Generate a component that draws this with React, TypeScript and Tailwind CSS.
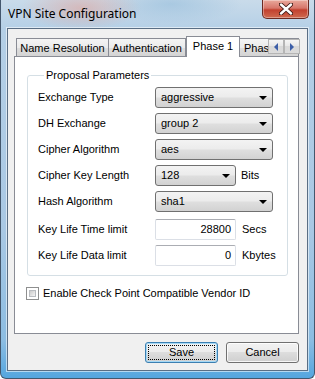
import React from "react";

const Combo = ({ value, className }: { value: string; className: string }) => (
  <div
    className={`flex h-[21px] items-center justify-between rounded-[3px] border border-[#707070] bg-[linear-gradient(#f3f3f3,#ececec_45%,#dedede_55%,#d2d2d2)] pl-[5px] pr-[5px] ${className}`}
  >
    <span>{value}</span>
    <svg width="8" height="4" viewBox="0 0 8 4">
      <path d="M0 0h8L4 4z" fill="#000" />
    </svg>
  </div>
);

const Field = ({ value }: { value: string }) => (
  <div className="flex h-[21px] w-[81px] items-center justify-end rounded-[2px] border border-[#dbdfe6] border-t-[#abadb3] bg-white pr-[4px]">
    {value}
  </div>
);

const Row = ({ label, children }: { label: string; children: React.ReactNode }) => (
  <div className="flex items-center">
    <div className="w-[117px]">{label}</div>
    {children}
  </div>
);

const App = () => {
  return (
    <div className="flex h-[379px] w-[315px] flex-col overflow-hidden rounded-b-[6px] border-x border-b border-[#44576d] bg-[image:radial-gradient(ellipse_60px_22px_at_80px_8px,rgba(226,160,150,0.55),transparent),radial-gradient(ellipse_70px_20px_at_170px_4px,rgba(150,190,220,0.6),transparent),linear-gradient(180deg,#c9dbea,#b4cfe6_30px,#a9c8e4_60%,#8cbde2_90%,#55a6df)] font-['Liberation_Sans',Arial,sans-serif] text-[11px] text-black">
      {/* title bar */}
      <div className="flex h-[28px] shrink-0 items-start">
        <div className="ml-[7px] mt-[6px] flex-1 font-['Noto_Sans',sans-serif] text-[12px] leading-[16px] text-black">
          VPN Site Configuration
        </div>
        <div className="mr-[5px] flex h-[19px] w-[47px] items-center justify-center rounded-b-[5px] border border-t-0 border-[#6b2a22] bg-[linear-gradient(#e9a99c,#d7766a_45%,#c2412f_55%,#cf6a4f)] shadow-[inset_0_0_0_1px_rgba(255,255,255,0.35)]">
          <svg width="14" height="12" viewBox="0 0 14 12">
            <path d="M2 1.5l10 9M12 1.5l-10 9" stroke="#3b1712" strokeWidth="4.2" strokeLinecap="round" />
            <path d="M2 1.5l10 9M12 1.5l-10 9" stroke="#fff" strokeWidth="2.4" strokeLinecap="round" />
          </svg>
        </div>
      </div>

      {/* client area */}
      <div className="mx-[6px] flex h-[343px] shrink-0 flex-col border border-[#5a6e84] bg-[#f0f0f0] shadow-[0_0_0_1px_rgba(255,255,255,0.55)]">
        <div className="ml-[6px] mt-[7px] w-[285px]">
          {/* tab strip */}
          <div className="relative flex h-[20px] items-end pl-[2px]">
            <div className="flex h-[18px] w-[93px] items-center justify-center border border-b-0 border-[#898c95] bg-[linear-gradient(#f4f4f4,#ebebeb_50%,#dedede_50%,#d4d4d4)] pt-[1px]">
              Name Resolution
            </div>
            <div className="flex h-[18px] w-[77px] items-center justify-center border border-b-0 border-l-0 border-[#898c95] bg-[linear-gradient(#f4f4f4,#ebebeb_50%,#dedede_50%,#d4d4d4)] pt-[1px]">
              Authentication
            </div>
            <div className="relative z-10 mb-[-1px] flex h-[21px] w-[54px] items-center justify-center border border-b-0 border-[#898c95] bg-white pb-[2px]">
              Phase 1
            </div>
            <div className="flex h-[18px] flex-1 items-center overflow-hidden border border-b-0 border-l-0 border-[#898c95] bg-[linear-gradient(#f4f4f4,#ebebeb_50%,#dedede_50%,#d4d4d4)] pl-[4px] pt-[1px]">
              Phase 2
            </div>
            <div className="absolute left-[254px] top-[3px] flex">
              {["M6 0v8L2 4z", "M2 0v8l4-4z"].map((d) => (
                <div
                  key={d}
                  className="flex h-[15px] w-[16px] items-center justify-center border border-[#b5b5b5] bg-[linear-gradient(#f6f6f6,#e6e6e6_50%,#d9d9d9_50%,#dcdcdc)]"
                >
                  <svg width="8" height="8" viewBox="0 0 8 8">
                    <path d={d} fill="#3d5fa8" />
                  </svg>
                </div>
              ))}
            </div>
          </div>

          {/* panel */}
          <div className="h-[278px] border border-[#898c95] bg-white pl-[12px] pr-[11px] pt-[12px]">
            <fieldset className="rounded-[3px] border border-[#d5dfe5] pb-[9px] pl-[10px] pr-[11px] pt-[5px]">
              <legend className="ml-[6px] px-[2px] leading-[13px]">Proposal Parameters</legend>
              <div className="flex flex-col gap-[5px]">
                <Row label="Exchange Type">
                  <Combo value="aggressive" className="w-[118px]" />
                </Row>
                <Row label="DH Exchange">
                  <Combo value="group 2" className="w-[118px]" />
                </Row>
                <Row label="Cipher Algorithm">
                  <Combo value="aes" className="w-[118px]" />
                </Row>
                <Row label="Cipher Key Length">
                  <Combo value="128" className="w-[81px]" />
                  <span className="ml-[5px]">Bits</span>
                </Row>
                <Row label="Hash Algorithm">
                  <Combo value="sha1" className="w-[118px]" />
                </Row>
                <div className="mt-[2px]">
                  <Row label="Key Life Time limit">
                    <Field value="28800" />
                    <span className="ml-[6px]">Secs</span>
                  </Row>
                </div>
                <Row label="Key Life Data limit">
                  <Field value="0" />
                  <span className="ml-[6px]">Kbytes</span>
                </Row>
              </div>
            </fieldset>

            <label className="ml-[-1px] mt-[9px] flex items-center gap-[4px]">
              <span className="flex h-[13px] w-[13px] items-center justify-center border border-[#8e8f8f] bg-white p-[2px]">
                <span className="h-full w-full border border-[#b9bcc0] bg-[linear-gradient(135deg,#cbcbcb,#f4f4f4)]" />
              </span>
              Enable Check Point Compatible Vendor ID
            </label>
          </div>
        </div>

        {/* buttons */}
        <div className="mr-[8px] mt-[8px] flex justify-end gap-[8px]">
          <button className="flex h-[21px] w-[73px] items-center justify-center rounded-[3px] border border-[#3c7fb1] bg-[linear-gradient(#f2f2f2,#ebebeb_50%,#dddddd_50%,#cfcfcf)] p-[2px] shadow-[inset_0_0_0_1px_#a5d9f6]">
            <span className="flex h-full w-full items-center justify-center border border-dotted border-black">
              Save
            </span>
          </button>
          <button className="flex h-[21px] w-[73px] items-center justify-center rounded-[3px] border border-[#707070] bg-[linear-gradient(#f2f2f2,#ebebeb_50%,#dddddd_50%,#cfcfcf)] shadow-[inset_0_0_0_1px_rgba(255,255,255,0.8)]">
            Cancel
          </button>
        </div>
      </div>
    </div>
  );
};

export default App;
